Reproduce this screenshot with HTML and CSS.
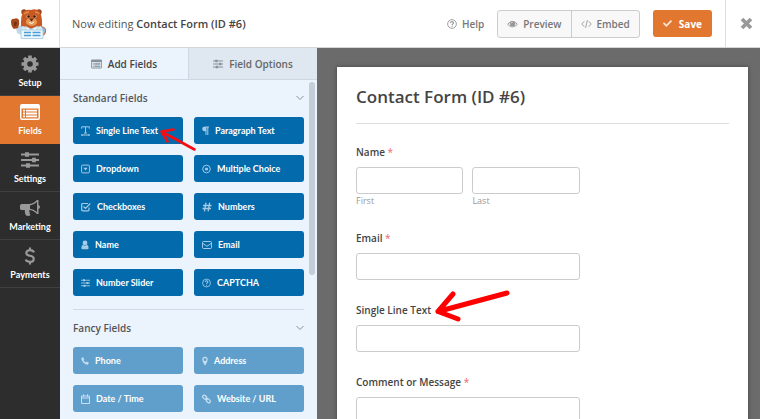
FILE: index.html
```html
<!DOCTYPE html>
<html lang="en">
<head>
<meta charset="utf-8">
<title>Contact Form (ID #6)</title>
<link rel="stylesheet" href="styles.css">
</head>
<body>
<svg class="defs" aria-hidden="true">
  <symbol id="i-list" viewBox="0 0 20 16"><path fill-rule="evenodd" fill="currentColor" d="M2 0h16a2 2 0 0 1 2 2v12a2 2 0 0 1-2 2H2a2 2 0 0 1-2-2V2a2 2 0 0 1 2-2zM1.500 4.500V14q0 .5.5.5h16q.5 0 .5-.5V4.500z"/><path stroke="currentColor" stroke-width="1.800" d="M3 6.700h2M6 6.700h11M3 9.500h2M6 9.500h11M3 12.300h2M6 12.300h11"/></symbol>
  <symbol id="i-sliders" viewBox="0 0 18 16"><path stroke="currentColor" stroke-width="1.800" d="M0 2.500h18M0 8h18M0 13.500h18"/><path fill="currentColor" d="M4 .3h4v4.400H4zM11 5.800h4v4.400h-4zM5 11.300h4v4.400H5z"/></symbol>
  <symbol id="i-help" viewBox="0 0 16 16"><circle cx="8" cy="8" r="7" fill="none" stroke="currentColor" stroke-width="1.500"/><path fill="none" stroke="currentColor" stroke-width="1.800" d="M5.600 6.300c.2-3 4.900-2.800 4.900 0 0 1.600-2.400 1.700-2.400 3.500M8.100 11v1.800"/></symbol>
</svg>

<header class="topbar">
  <a class="logo" href="#" aria-label="Home">
    <svg width="38" height="32" viewBox="0 0 38 32">
      <path d="M31 18q6 1 5 6-1 4-5 4z" fill="#c4683a"/><path d="M32 19q4 1 3 5-1 3-3 3z" fill="#8fb9d6"/>
      <path d="M11 17 6 20l1 5 6 3 2-8z" fill="#bfd9ea"/>
      <path d="M1 13q1-3 3-2 3-2 5 1 1 4-1 8l-4 1q-3-2-3-8z" fill="#a8481b"/><path d="M4 14q2-1 3 1l-1 3H4z" fill="#71310f"/>
      <circle cx="14" cy="4" r="2.700" fill="#9b431c"/><circle cx="29" cy="4" r="2.700" fill="#9b431c"/>
      <path d="M13 4q3-3 8-2 6-2 9 2 2 5 2 9 1 8-5 8H16q-6 0-5-7 0-6 2-10z" fill="#c75a23"/>
      <path d="M14 6q2-2 5-2M25 4q3 0 4 2" stroke="#e68b4e" stroke-width="1.500" fill="none"/>
      <circle cx="18" cy="8.500" r="1.700" fill="#d8a078"/><circle cx="25" cy="8.500" r="1.700" fill="#d8a078"/><circle cx="18.500" cy="8.500" r="1.200" fill="#301a14"/><circle cx="24.500" cy="8.500" r="1.200" fill="#301a14"/>
      <path d="M16 14q0-4 5-4 6 0 6 4 0 3-5 4-6-1-6-4z" fill="#e69a58"/><path d="M19 10.500h5l-2.500 3z" fill="#5b2815"/><path d="M19 14.500q3 2 5-.5" stroke="#fff" fill="none"/>
      <path d="M12 18l4 1 5 3 6-3 4-1 2 4v8H11v-8z" fill="#d5e8f4"/><path d="m15 18 2 5 4-2zm13 0-2 5-5-2z" fill="#fff" stroke="#9ec3dc" stroke-width=".6"/>
      <path d="M11 22h22v8.500H11z" fill="#eef7fc" stroke="#9ec6e1" stroke-width=".8"/>
      <path d="M14 24.500h7M14 27.500h7M22.500 24.500h8M22.500 27.500h8" stroke="#4a9ed6" stroke-width="1.700"/>
    </svg>
  </a>
  <p class="editing">Now editing <strong>Contact Form (ID #6)</strong></p>
  <div class="actions">
    <button class="help" type="button"><svg width="10" height="10"><use href="#i-help"/></svg>Help</button>
    <div class="group">
      <button type="button"><svg width="11" height="10" viewBox="0 0 18 14"><path d="M1 7.500Q9-2 17 7.500 9 16 1 7.500z" fill="none" stroke="currentColor" stroke-width="1.500"/><circle cx="9" cy="6.500" r="4.500" fill="currentColor"/><path d="M6.500 6Q7 4 9 4" stroke="#fff" fill="none"/></svg>Preview</button>
      <button type="button"><svg width="11" height="10" viewBox="0 0 20 16"><path d="M6 3 1.500 8 6 13M14 3l4.500 5-4.500 5M11.500 1l-3 14" fill="none" stroke="currentColor" stroke-width="1.600"/></svg>Embed</button>
    </div>
    <button class="save" type="button"><svg width="9" height="9" viewBox="0 0 512 512"><path fill="currentColor" d="M173.898 439.404l-166.400-166.400c-9.997-9.997-9.997-26.206 0-36.204l36.203-36.204c9.997-9.998 26.207-9.998 36.204 0L192 312.690 432.095 72.596c9.997-9.997 26.207-9.997 36.204 0l36.203 36.204c9.997 9.997 9.997 26.206 0 36.204l-294.400 294.401c-9.998 9.997-26.207 9.997-36.204-.001z"/></svg>Save</button>
    <button class="close" type="button" aria-label="Close"><svg width="13" height="13" viewBox="0 0 13 13"><path d="m2 2 9 9m0-9-9 9" stroke="currentColor" stroke-width="3.800" stroke-linejoin="round"/></svg></button>
  </div>
</header>

<div class="workspace">
  <nav class="rail">
    <a href="#"><svg width="18" height="18" viewBox="0 0 18 18"><circle cx="9" cy="9" r="4.700" fill="none" stroke="currentColor" stroke-width="3.800"/><path stroke="currentColor" stroke-width="3.600" d="M9 .5v3M9 14.500v3M.5 9h3M14.500 9h3M3 3l2 2M13 13l2 2M15 3l-2 2M5 13l-2 2"/></svg>Setup</a>
    <a class="active" href="#"><svg width="20" height="18"><use href="#i-list"/></svg>Fields</a>
    <a href="#"><svg width="18" height="18"><use href="#i-sliders"/></svg>Settings</a>
    <a href="#"><svg width="20" height="18" viewBox="0 0 20 18"><path fill="currentColor" fill-rule="evenodd" d="M2 5h7q4 0 8-4h1.500v5q1.500.5 1.500 2t-1.500 2v5H17q-4-4-7.500-4-.8 1 .2 2.300-.6 1 .8 2.700-1.500 1.500-4.500.5Q4.500 14 4.800 11H2q-2 0-2-1.500V6.500Q0 5 2 5zm8 1.500v3.200q3.500.3 7 3.300V3q-3.500 3.200-7 3.500z"/></svg>Marketing</a>
    <a href="#"><svg width="12" height="20" viewBox="0 0 12 20"><path d="M10.500 6Q9.500 3.500 6 3.500T1.800 6.600Q1.800 9 6 9.800t4.200 3.400Q10.200 16.500 6 16.500T1.200 14M6 .5v3M6 16.500v3" stroke="currentColor" stroke-width="2.300" fill="none"/></svg>Payments</a>
  </nav>

  <section class="panel">
    <div class="tabs">
      <button class="on" type="button"><svg width="11" height="10"><use href="#i-list"/></svg>Add Fields</button>
      <button type="button"><svg width="10" height="10"><use href="#i-sliders"/></svg>Field Options</button>
    </div>
    <div class="scroller">
      <div class="groups">
        <div class="fieldset">
          <h2>Standard Fields<svg width="8" height="6" viewBox="0 0 8 6"><path d="m.5 1 3.500 3.500L7.500 1" fill="none" stroke="currentColor"/></svg></h2>
          <div class="fields">
            <button type="button"><svg width="9" height="10" viewBox="0 0 9 10"><path d="M.7 2.700V.8h7.600v1.900M4.500.8v6M3 7h3M.5 9h8M1.500 8 .5 9l1 1M7.500 8l1 1-1 1" fill="none" stroke="currentColor"/></svg>Single Line Text
              <svg class="arrow-small" width="40" height="26" viewBox="0 0 40 26"><path d="m36.500 22.500-33-18M15.500 2.500l-12 2 6 10" fill="none" stroke="#f60d12" stroke-width="2.600" stroke-linecap="round" stroke-linejoin="round"/></svg></button>
            <button type="button"><svg width="7" height="10" viewBox="0 0 7 10"><path d="M7 .5v1H6.300V9h-1V1.500h-.8V9h-1V5.300Q.3 5.300.3 2.900T3.500.5z" fill="currentColor"/></svg>Paragraph Text</button>
            <button type="button"><svg width="9" height="10" viewBox="0 0 9 10"><rect x=".6" y="1.100" width="7.800" height="7.800" rx="1" fill="none" stroke="currentColor"/><path d="M2.300 3.700h4.400L4.500 6.500z" fill="currentColor"/></svg>Dropdown</button>
            <button type="button"><svg width="9" height="10" viewBox="0 0 9 10"><circle cx="4.500" cy="5" r="3.800" fill="none" stroke="currentColor"/><circle cx="4.500" cy="5" r="1.600" fill="currentColor"/></svg>Multiple Choice</button>
            <button type="button"><svg width="10" height="10" viewBox="0 0 10 10"><path d="M8 5.500v2.300q0 1-1 1H1.700q-1 0-1-1V2.500q0-1 1-1H7M2.500 4.500l2 2 4.800-5" fill="none" stroke="currentColor" stroke-width="1.200"/></svg>Checkboxes</button>
            <button type="button"><svg width="10" height="10" viewBox="0 0 10 10"><path d="M4 .7 2.400 9.300M7.700.7 6.100 9.300M1 3.500h8.500M.5 6.500H9" fill="none" stroke="currentColor" stroke-width="1.300"/></svg>Numbers</button>
            <button type="button"><svg width="8" height="10" viewBox="0 0 8 10"><circle cx="4" cy="3" r="2.400" fill="currentColor"/><path d="M2 4.800Q.4 5.200.4 8q0 1.300 1.200 1.300h4.800Q7.600 9.300 7.600 8 7.600 5.200 6 4.800 4 6.500 2 4.800z" fill="currentColor"/></svg>Name</button>
            <button type="button"><svg width="10" height="10" viewBox="0 0 10 10"><rect x=".5" y="1.500" width="9" height="7" rx="1" fill="none" stroke="currentColor"/><path d="m.7 3.300 4.300 3 4.300-3" fill="none" stroke="currentColor"/></svg>Email</button>
            <button type="button"><svg width="9" height="10"><use href="#i-sliders"/></svg>Number Slider</button>
            <button type="button"><svg width="9" height="10"><use href="#i-help"/></svg>CAPTCHA</button>
          </div>
        </div>
        <div class="fieldset fancy">
          <h2>Fancy Fields<svg width="8" height="6" viewBox="0 0 8 6"><path d="m.5 1 3.500 3.500L7.500 1" fill="none" stroke="currentColor"/></svg></h2>
          <div class="fields">
            <button type="button"><svg width="8" height="10" viewBox="0 0 8 10"><path d="M.4 2.200 2 1l1.300 2.200-.8.900q.7 1.600 2.300 2.300l.9-.8L8 6.900 6.800 8.600Q5.300 9.200 2.600 6.700T.4 2.200z" fill="currentColor"/></svg>Phone</button>
            <button type="button"><svg width="6" height="10" viewBox="0 0 6 10"><path fill-rule="evenodd" d="M3 .7Q5.700.9 5.700 3.500 5.700 5 3.400 9.300h-.8Q.3 5 .3 3.500.3.900 3 .7zM3 2a1.500 1.500 0 1 0 0 3 1.500 1.500 0 0 0 0-3z" fill="currentColor"/></svg>Address</button>
            <button type="button"><svg width="9" height="10" viewBox="0 0 9 10"><path d="M.5 2h8v7.500h-8zM.5 4h8M2.500.3v2.400M6.500.3v2.400" fill="none" stroke="currentColor"/></svg>Date / Time</button>
            <button type="button"><svg width="9" height="10" viewBox="0 0 9 10"><g fill="none" stroke="currentColor" stroke-width="1.200"><rect x="-2.200" y="-1.500" width="4.400" height="3" rx="1.300" transform="translate(2.700 3.200) rotate(45)"/><rect x="-2.200" y="-1.500" width="4.400" height="3" rx="1.300" transform="translate(6.300 6.800) rotate(45)"/><path d="m3.500 4 2 2"/></g></svg>Website / URL</button>
          </div>
        </div>
      </div>
      <div class="track"><div class="thumb"></div></div>
    </div>
  </section>

  <main class="preview">
    <form class="sheet">
      <h1>Contact Form (ID #6)</h1>
      <div class="row">
        <label for="first">Name <span class="req">*</span></label>
        <div class="names">
          <div><input id="first" type="text"><label class="sub" for="first">First</label></div>
          <div><input id="last" type="text"><label class="sub" for="last">Last</label></div>
        </div>
      </div>
      <div class="row"><label for="email">Email <span class="req">*</span></label><input id="email" type="text"></div>
      <div class="row"><label class="marked" for="single">Single Line Text
        <svg class="arrow-big" width="80" height="36" viewBox="0 0 80 36"><path d="M73 7 4 25.500M19 8 4 25.500 24 33" fill="none" stroke="#f00" stroke-width="5" stroke-linecap="round" stroke-linejoin="round"/></svg></label><input id="single" type="text"></div>
      <div class="row"><label for="comment">Comment or Message <span class="req">*</span></label><textarea id="comment"></textarea></div>
    </form>
  </main>
</div>
</body>
</html>
```

FILE: styles.css
```css
* { box-sizing: border-box; }
body {
  margin: 0;
  height: 100vh;
  display: flex;
  flex-direction: column;
  overflow: hidden;
  font: 10px/16px "Open Sans", "Noto Sans", sans-serif;
  color: #444;
}
button, input, textarea { font: inherit; color: inherit; margin: 0; }
button { display: flex; align-items: center; border: 0; padding: 0; background: none; white-space: nowrap; }
svg { flex: none; }
a { color: inherit; text-decoration: none; }
.defs { position: absolute; width: 0; height: 0; }

.topbar { flex: none; display: flex; height: 48px; background: #fff; border-bottom: 1px solid #d6d6d6; }
.logo { width: 60px; padding-right: 2px; display: flex; align-items: center; justify-content: center; border-right: 1px solid #ddd; }
.editing { margin: 0; padding-left: 12px; align-self: center; font-size: 11px; color: #555; white-space: nowrap; }
.editing strong { font-weight: 600; color: #444; }
.actions { margin-left: auto; display: flex; align-items: center; font-weight: 600; color: #777; }
.actions svg { color: #999; }
.help { gap: 5px; margin-right: 13px; }
.group { display: flex; height: 28px; background: #f8f8f8; border: 1px solid #ccc; border-radius: 3px; margin-right: 13px; }
.group button { gap: 5px; padding: 0 9px; }
.group button + button { border-left: 1px solid #ccc; }
.save { gap: 7px; height: 27px; padding: 0 10px; border-radius: 3px; background: #e27730; color: #fff; font-weight: 700; }
.actions .save svg { color: #fbe3d3; }
.close { width: 35px; height: 47px; margin-left: 13px; padding-left: 14px; border-left: 1px solid #ddd; }

.workspace { flex: 1; min-height: 0; display: flex; }
.rail { flex: none; width: 60px; background: #2d2d2d; color: #fff; }
.rail a { height: 48px; padding-top: 3px; display: flex; flex-direction: column; align-items: center; justify-content: center; gap: 2px; font: 700 9px/16px Lato, "Open Sans", sans-serif; border-bottom: 1px solid #404040; }
.rail svg { height: 18px; color: #999; }
.rail .active { background: #e27730; border-color: #e27730; }
.rail .active svg { color: #fff; }

.panel { flex: none; width: 257px; display: flex; flex-direction: column; background: #ebf3fc; }
.tabs { flex: none; display: flex; height: 32px; border-bottom: 1px solid #ccd8e4; }
.tabs button { flex: 1; justify-content: center; gap: 6px; background: #dfe8f0; color: #666; font-weight: 600; border-left: 1px solid #ccd8e4; }
.tabs .on { background: #ebf3fc; color: #444; border-left: 0; }
.tabs svg { color: #86919c; }
.scroller { flex: 1; min-height: 0; display: flex; }
.groups { flex: 1; overflow: hidden; padding: 0 5px 0 13px; }
.fieldset { padding: 10px 0 13px; }
.fieldset + .fieldset { border-top: 1px solid #cfdbe8; }
h2 { margin: 0 0 11px; display: flex; align-items: center; justify-content: space-between; font-size: 10px; line-height: 16px; font-weight: 600; color: #555; }
h2 svg { color: #86919c; }
.fields { display: grid; grid-template-columns: 1fr 1fr; gap: 11px; }
.fields button { position: relative; height: 27px; padding: 0 8px; gap: 6px; border-radius: 3px; background: #036aab; color: #fff; font: 700 9px/16px Lato, "Open Sans", sans-serif; }
.fields button > svg:first-child { color: #a5cbe4; }
.fancy .fields button { background: #609fcb; }
.fancy .fields button > svg:first-child { color: #c5def0; }
.fields .arrow-small { position: absolute; left: 85px; top: 10px; z-index: 1; }
.track { flex: none; width: 8px; padding: 2px 2px 0 0; }
.thumb { height: 193px; border-radius: 3px; background: #c5cdd8; }

.preview { flex: 1; min-width: 0; overflow: hidden; padding: 19px 12px 0 20px; background: #6b6b6b; }
.sheet { background: #fff; padding: 16px 19px 20px; box-shadow: 0 0 4px #444; }
h1 { margin: 0 0 20px; padding-bottom: 12px; border-bottom: 1px solid #ddd; font-size: 17px; line-height: 28px; font-weight: 600; color: #444; }
.row { margin-bottom: 22px; }
.row label { display: block; margin-bottom: 7px; font-size: 10px; line-height: 16px; font-weight: 600; }
.req { color: #e66; font-weight: 400; }
.row input, .row textarea { display: block; width: 60%; height: 27px; border: 1px solid #ccc; border-radius: 3px; background: #fff; }
.row textarea { height: 72px; resize: none; }
.names { display: flex; gap: 9px; width: 60%; }
.names div { flex: 1; min-width: 0; }
.row .names input { width: 100%; }
.row .names .sub { margin: 0; font-size: 9px; line-height: 14px; font-weight: 400; color: #999; }
.row .marked { position: relative; }
.arrow-big { position: absolute; left: 78px; top: -16px; }
```
